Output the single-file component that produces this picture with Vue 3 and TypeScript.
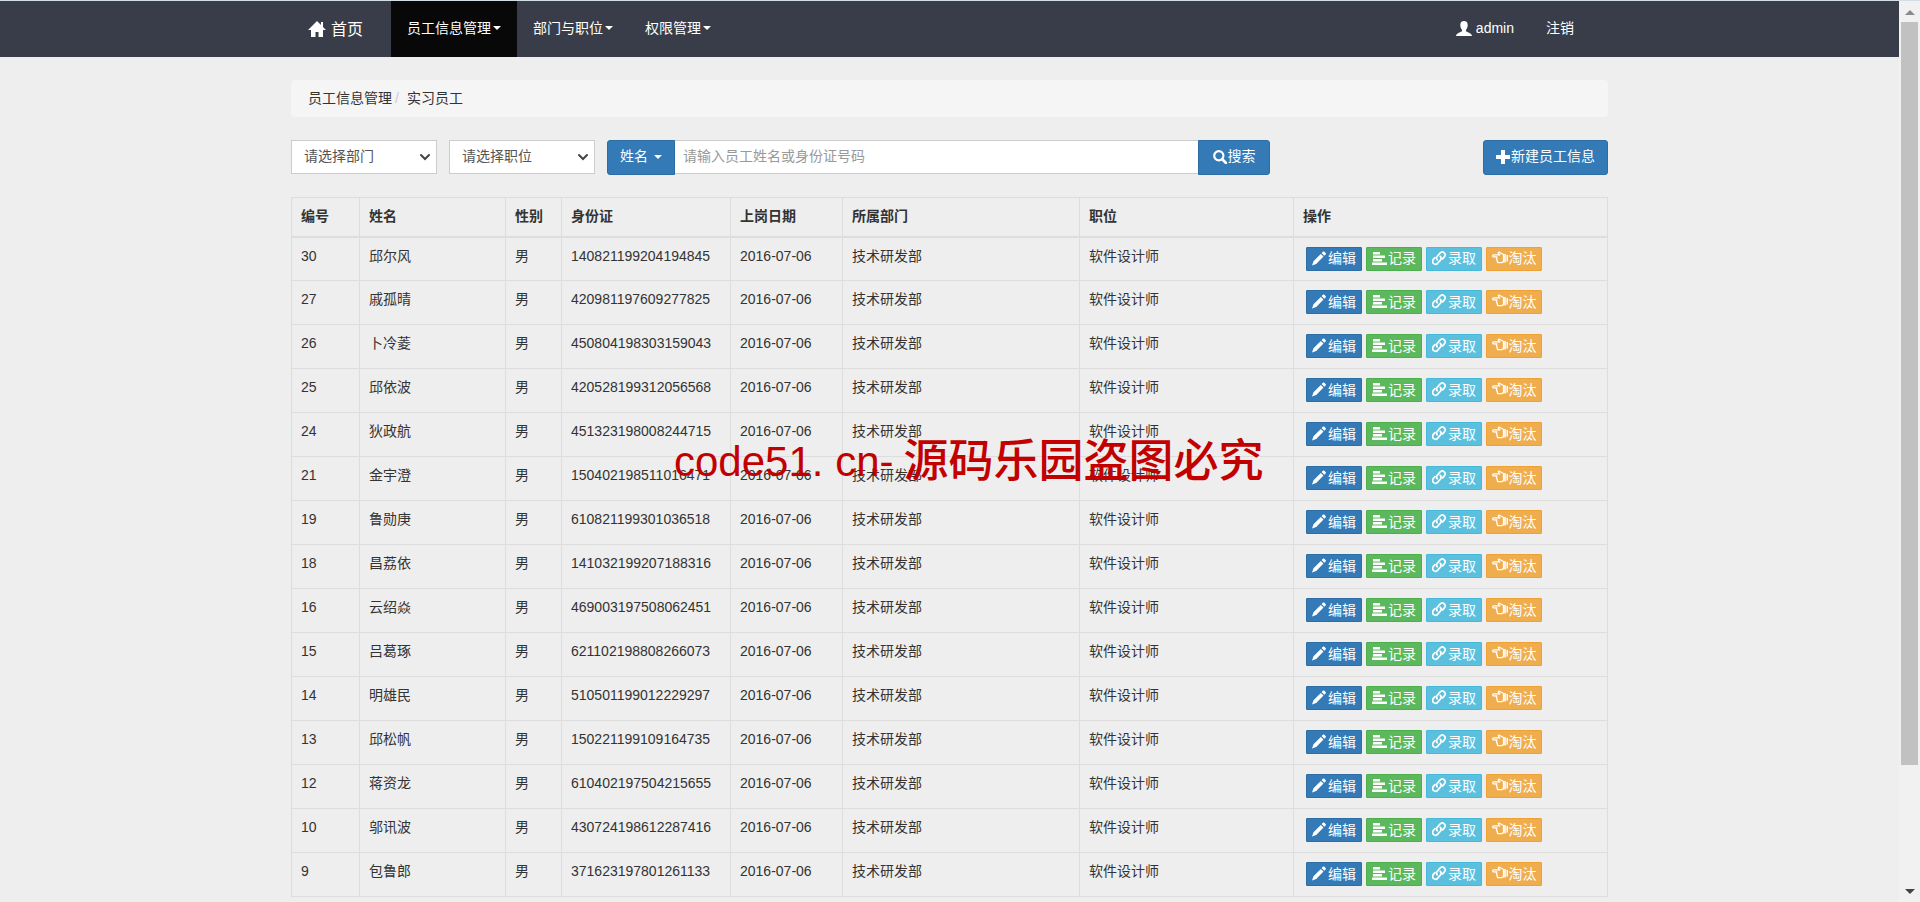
<script setup lang="ts">
import { ref } from 'vue'

interface Employee {
  id: number
  name: string
  idCard: string
}

const columns: string[] = ['编号', '姓名', '性别', '身份证', '上岗日期', '所属部门', '职位', '操作']
const keyword = ref('')

const employees: Employee[] = [
  { id: 30, name: '邱尔风', idCard: '140821199204194845' },
  { id: 27, name: '戚孤晴', idCard: '420981197609277825' },
  { id: 26, name: '卜冷菱', idCard: '450804198303159043' },
  { id: 25, name: '邱依波', idCard: '420528199312056568' },
  { id: 24, name: '狄政航', idCard: '451323198008244715' },
  { id: 21, name: '金宇澄', idCard: '150402198511016471' },
  { id: 19, name: '鲁勋庚', idCard: '610821199301036518' },
  { id: 18, name: '昌荔依', idCard: '141032199207188316' },
  { id: 16, name: '云绍焱', idCard: '469003197508062451' },
  { id: 15, name: '吕葛琢', idCard: '621102198808266073' },
  { id: 14, name: '明雄民', idCard: '510501199012229297' },
  { id: 13, name: '邱松帆', idCard: '150221199109164735' },
  { id: 12, name: '蒋资龙', idCard: '610402197504215655' },
  { id: 10, name: '邬讯波', idCard: '430724198612287416' },
  { id: 9, name: '包鲁郎', idCard: '371623197801261133' },
]
</script>

<template>
  <div class="window">
    <div class="page">
      <header class="navbar">
        <nav class="container nav-inner">
          <a class="brand" href="#">
            <svg viewBox="0 0 18 16" width="18" height="16" aria-hidden="true">
              <path fill="currentColor" d="M9 0 0 9h3v7h4.500v-5h3v5H15V9h3l-3-3V1h-2v3z" />
            </svg>
            首页
          </a>
          <a class="nav-item active" href="#">员工信息管理<span class="caret"></span></a>
          <a class="nav-item" href="#">部门与职位<span class="caret"></span></a>
          <a class="nav-item" href="#">权限管理<span class="caret"></span></a>
          <div class="nav-right">
            <a class="nav-item user" href="#">
              <svg viewBox="0 0 16 15" width="16" height="15" aria-hidden="true">
                <path fill="currentColor" d="M8 0C5.500 0 4.300 1.600 4.300 4c0 2.200.8 3.800 1.700 4.700v1.500C5.500 11 .5 11.500 0 15h16c-.5-3.500-5.500-4-6-4.800V8.700C10.900 7.800 11.700 6.200 11.700 4 11.700 1.600 10.500 0 8 0z" />
              </svg>
              admin
            </a>
            <a class="nav-item" href="#">注销</a>
          </div>
        </nav>
      </header>

      <main class="container">
        <ol class="breadcrumb">
          <li><a href="#">员工信息管理</a></li>
          <li>实习员工</li>
        </ol>

        <form class="toolbar" @submit.prevent>
          <span class="select-wrap">
            <select aria-label="部门"><option>请选择部门</option></select>
            <svg viewBox="0 0 12 8" width="12" height="8" aria-hidden="true"><path d="M2 2l4 4 4-4" /></svg>
          </span>
          <span class="select-wrap">
            <select aria-label="职位"><option>请选择职位</option></select>
            <svg viewBox="0 0 12 8" width="12" height="8" aria-hidden="true"><path d="M2 2l4 4 4-4" /></svg>
          </span>
          <div class="search">
            <button class="btn btn-left" type="button">姓名<span class="caret spaced"></span></button>
            <input v-model="keyword" type="text" aria-label="关键字" placeholder="请输入员工姓名或身份证号码" />
            <button class="btn btn-right" type="submit">
              <svg viewBox="0 0 14 14" width="14" height="14" aria-hidden="true">
                <circle cx="5.800" cy="5.800" r="4.600" fill="none" stroke="currentColor" stroke-width="2.200" />
                <path d="M9 9l4 4" stroke="currentColor" stroke-width="2.600" stroke-linecap="round" />
              </svg>搜索
            </button>
          </div>
          <button class="btn btn-new" type="button">
            <svg viewBox="0 0 14 14" width="14" height="14" aria-hidden="true">
              <path fill="currentColor" d="M5 0h4v5h5v4H9v5H5V9H0V5h5z" />
            </svg>新建员工信息
          </button>
        </form>

        <table>
          <colgroup>
            <col class="c-id" /><col class="c-name" /><col class="c-sex" /><col class="c-card" />
            <col class="c-date" /><col class="c-dept" /><col class="c-job" /><col />
          </colgroup>
          <thead>
            <tr><th v-for="c in columns" :key="c" scope="col">{{ c }}</th></tr>
          </thead>
          <tbody>
            <tr v-for="e in employees" :key="e.id">
              <td>{{ e.id }}</td>
              <td>{{ e.name }}</td>
              <td>男</td>
              <td>{{ e.idCard }}</td>
              <td>2016-07-06</td>
              <td>技术研发部</td>
              <td>软件设计师</td>
              <td class="ops">
                <div class="actions">
                  <button class="edit" type="button">
                    <svg viewBox="0 0 15 16" width="15" height="16" aria-hidden="true">
                      <path fill="currentColor" d="M0 14.500l1.500-4.300 7.300-7.300 2.700 2.700-7.300 7.400zM9.600 2.100l1.300-1.300c.5-.5 1-.5 1.500 0l1.200 1.200c.5.5.5 1 0 1.500l-1.300 1.300z" />
                    </svg>编辑
                  </button>
                  <button class="record" type="button">
                    <svg viewBox="0 0 15 16" width="15" height="16" aria-hidden="true">
                      <path fill="currentColor" d="M1 1h7v2.500H1zM1 4.500h12V7H1zM1 8h9v2.500H1zM0 11.500h15V14H0z" />
                    </svg>记录
                  </button>
                  <button class="accept" type="button">
                    <svg viewBox="0 0 15 16" width="15" height="16" aria-hidden="true">
                      <g fill="none" stroke="currentColor" stroke-width="1.700" stroke-linecap="round">
                        <path d="M5.200 8.800C4.300 7.700 4.400 6.300 5.300 5.200L8 2.100C9.200.8 11 .7 12.200 1.800s1.200 2.900.1 4.100L10.600 7.900" />
                        <path d="M8.300 5.400c1 1.100 1.100 2.500.1 3.700L5.600 12.300c-1.200 1.300-3 1.300-4.100.2s-1.200-2.800-.1-4.100L2.900 6.600" />
                      </g>
                    </svg>录取
                  </button>
                  <button class="reject" type="button">
                    <svg viewBox="0 0 16 16" width="16" height="16" aria-hidden="true">
                      <path fill="none" stroke="currentColor" stroke-width="1.300" stroke-linejoin="round" d="M11.500 3.500 7.500 1.200C6.600.8 6 1.800 6.600 2.500l1.200 1.400H1.700c-1.300 0-1.300 2 0 2H5c-.8.4-.8 1.600 0 2-.5.6-.3 1.500.4 1.900-.3.9.2 1.900 1.200 1.900h3l1.900-.9z" />
                      <path fill="currentColor" d="M12.200 3h1.600v8.500h-1.600zM14.500 4H16v6.500h-1.500z" />
                    </svg>淘汰
                  </button>
                </div>
              </td>
            </tr>
          </tbody>
        </table>
      </main>
    </div>

    <div class="scrollbar" aria-hidden="true">
      <span class="arrow up"></span>
      <span class="thumb"></span>
      <span class="arrow down"></span>
    </div>

    <p class="watermark"><span class="latin">code51. cn-</span><span>源码乐园盗图必究</span></p>
  </div>
</template>

<style>
body {
  background: #eee;
  overflow: hidden;
}
</style>

<style scoped>
* {
  box-sizing: border-box;
}

.window {
  position: relative;
  display: flex;
  height: 100vh;
  overflow: hidden;
  border-top: 1px solid #d3dde6;
  color: #333;
  font: 14px/19px "Liberation Sans", "Noto Sans CJK SC", sans-serif;
}

.page {
  flex: 1;
  min-width: 0;
}

.container {
  max-width: 1317px;
  margin: 0 auto;
}

a {
  color: inherit;
  text-decoration: none;
}

.navbar {
  background: #393d49;
  color: #fff;
}

.nav-inner {
  display: flex;
  height: 56px;
}

.brand {
  display: flex;
  align-items: center;
  gap: 5px;
  width: 100px;
  padding-left: 17px;
  font-size: 16px;
}

.nav-item {
  display: flex;
  align-items: center;
  padding: 0 16px 2px;
}

.nav-item.active {
  background: #080808;
}

.nav-right {
  display: flex;
  margin-left: auto;
  margin-right: 18px;
}

.user {
  gap: 4px;
}

.caret {
  display: inline-block;
  margin-left: 2px;
  border: 4px solid transparent;
  border-top-color: currentColor;
  border-bottom-width: 0;
}

.caret.spaced {
  margin-left: 5px;
}

.breadcrumb {
  display: flex;
  align-items: center;
  height: 37px;
  margin: 23px 0;
  padding: 0 17px;
  list-style: none;
  background: #f5f5f5;
  border-radius: 4px;
}

.breadcrumb li + li::before {
  content: "/";
  padding: 0 8px 0 3px;
  color: #ccc;
}

.toolbar {
  display: flex;
  height: 35px;
  margin-bottom: 22px;
}

.select-wrap {
  position: relative;
  flex: 0 1 146px;
  margin-right: 12px;
}

.select-wrap svg {
  position: absolute;
  right: 6px;
  top: 13px;
  pointer-events: none;
  fill: none;
  stroke: #444;
  stroke-width: 2;
  stroke-linecap: round;
}

select,
.search input {
  width: 100%;
  height: 34px;
  border: 1px solid #ccc;
  border-radius: 0;
  background: #fff;
  color: #555;
  font: inherit;
  outline: 0;
}

select {
  appearance: none;
  padding: 0 12px 2px;
}

.search {
  display: flex;
  flex: 0 1 663px;
  min-width: 0;
}

.search input {
  flex: 1;
  min-width: 0;
  padding: 0 8px 2px;
  border-left: 0;
  border-right: 0;
}

.search input::placeholder {
  color: #999;
}

.btn {
  display: flex;
  flex: none;
  align-items: center;
  justify-content: center;
  gap: 1px;
  height: 35px;
  padding: 0 12px 2px;
  border: 1px solid #2e6da4;
  border-radius: 3px;
  background: #337ab7;
  color: #fff;
  font: inherit;
  white-space: nowrap;
}

.btn-left {
  width: 68px;
  border-radius: 3px 0 0 3px;
}

.btn-right {
  width: 72px;
  border-radius: 0 3px 3px 0;
}

.btn-new {
  margin-left: auto;
}

table {
  width: 100%;
  table-layout: fixed;
  border-collapse: collapse;
}

th,
td {
  padding: 9px;
  border: 1px solid #ddd;
  text-align: left;
  vertical-align: top;
}

th {
  height: 39px;
  border-bottom-width: 2px;
}

td {
  height: 44px;
}

td.ops {
  padding: 9px 12px;
}

.c-id { width: 68px; }
.c-name { width: 146px; }
.c-sex { width: 56px; }
.c-card { width: 169px; }
.c-date { width: 112px; }
.c-dept { width: 237px; }
.c-job { width: 214px; }

.actions {
  display: flex;
  gap: 4px;
}

.actions button {
  display: flex;
  align-items: center;
  justify-content: center;
  gap: 1px;
  width: 56px;
  height: 24px;
  padding: 0;
  border: 1px solid;
  border-radius: 1px;
  color: #fff;
  font: inherit;
  white-space: nowrap;
}

.actions svg {
  flex: none;
}

.actions .edit { background: #337ab7; border-color: #2e6da4; }
.actions .record { background: #5cb85c; border-color: #4cae4c; }
.actions .accept { background: #5bc0de; border-color: #46b8da; }
.actions .reject { background: #f0ad4e; border-color: #eea236; }

.scrollbar {
  display: flex;
  flex-direction: column;
  width: 21px;
  padding: 9px 2px 8px;
  background: #f1f1f1;
}

.arrow {
  align-self: center;
  border: 5px solid transparent;
}

.arrow.up {
  border-top-width: 0;
  border-bottom-color: #8b8b8b;
}

.arrow.down {
  margin-top: auto;
  border-bottom-width: 0;
  border-top-color: #444;
}

.thumb {
  height: 84%;
  margin-top: 7px;
  background: #c1c1c1;
}

.watermark {
  position: absolute;
  left: 674px;
  top: 429px;
  display: flex;
  align-items: center;
  gap: 10px;
  margin: 0;
  color: #c20000;
  font-size: 45px;
  font-weight: 500;
  line-height: 64px;
  white-space: nowrap;
  pointer-events: none;
}

.latin {
  font-size: 42px;
}
</style>
